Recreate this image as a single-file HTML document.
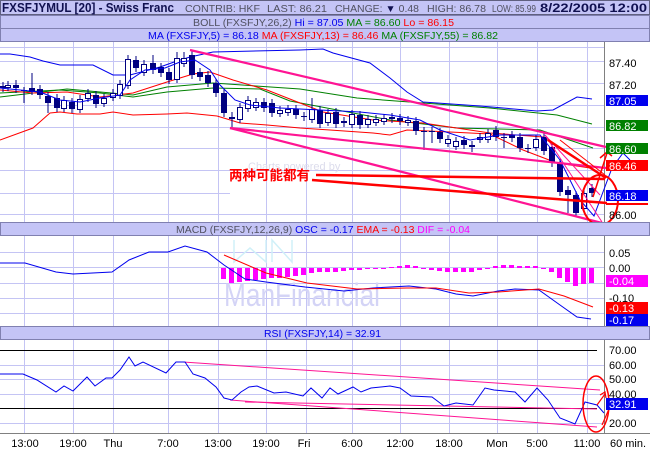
<!DOCTYPE html>
<html><head><meta charset="utf-8"><style>
html,body{margin:0;padding:0;background:#fff;}
svg{display:block;font-family:"Liberation Sans",sans-serif;}
</style></head><body>
<svg width="650" height="450" viewBox="0 0 650 450" xmlns="http://www.w3.org/2000/svg">
<rect x="0" y="0" width="650" height="450" fill="#fff"/>
<!-- header bars -->
<rect x="0.5" y="0.5" width="649" height="14" fill="#c4c4f6" stroke="#606080"/>
<rect x="0.5" y="15.5" width="649" height="13" fill="#c4c4f6" stroke="#8080b0"/>
<rect x="0.5" y="28.5" width="649" height="13" fill="#c4c4f6" stroke="#8080b0"/>
<text x="2" y="12" font-size="12.5" font-weight="bold" fill="#101050" textLength="172" lengthAdjust="spacingAndGlyphs">FXSFJYMUL [20] - Swiss Franc</text>
<text x="185" y="12" font-size="10" fill="#505060" textLength="75" lengthAdjust="spacingAndGlyphs">CONTRIB: HKF</text>
<text x="267" y="12" font-size="10" fill="#505060" textLength="60" lengthAdjust="spacingAndGlyphs">LAST: 86.21</text>
<text x="335" y="12" font-size="10" fill="#505060" textLength="84" lengthAdjust="spacingAndGlyphs">CHANGE: <tspan fill="#101050">▼</tspan> 0.48</text>
<text x="427" y="12" font-size="10" fill="#505060" textLength="59" lengthAdjust="spacingAndGlyphs">HIGH: 86.78</text>
<text x="492" y="12" font-size="10" fill="#505060" textLength="44" lengthAdjust="spacingAndGlyphs">LOW: 85.99</text>
<text x="540" y="12" font-size="12" font-weight="bold" fill="#101050" textLength="107" lengthAdjust="spacingAndGlyphs">8/22/2005 12:00</text>
<text x="193" y="26" font-size="10" fill="#505060" textLength="261" lengthAdjust="spacingAndGlyphs">BOLL (FXSFJY,26,2) <tspan fill="#0000ee">Hi = 87.05</tspan> <tspan fill="#008000">MA = 86.60</tspan> <tspan fill="#ff0000">Lo = 86.15</tspan></text>
<text x="148" y="39" font-size="10" fill="#0000ee" textLength="350" lengthAdjust="spacingAndGlyphs">MA (FXSFJY,5) = 86.18 <tspan fill="#ff0000">MA (FXSFJY,13) = 86.46</tspan> <tspan fill="#008000">MA (FXSFJY,55) = 86.82</tspan></text>

<!-- grid -->
<g stroke="#c4c4f4" stroke-width="1">
<line x1="0" y1="47.5" x2="604" y2="47.5"/><line x1="0" y1="61.5" x2="604" y2="61.5"/><line x1="0" y1="83.5" x2="604" y2="83.5"/><line x1="0" y1="105.5" x2="604" y2="105.5"/><line x1="0" y1="127.5" x2="604" y2="127.5"/><line x1="0" y1="148.5" x2="604" y2="148.5"/><line x1="0" y1="170.5" x2="604" y2="170.5"/><line x1="0" y1="193.5" x2="230" y2="193.5"/><line x1="0" y1="214.5" x2="604" y2="214.5"/>
<line x1="0" y1="252.5" x2="604" y2="252.5"/><line x1="0" y1="267.5" x2="604" y2="267.5"/><line x1="0" y1="283.5" x2="604" y2="283.5"/><line x1="0" y1="298.5" x2="604" y2="298.5"/><line x1="0" y1="313.5" x2="604" y2="313.5"/>
<line x1="0" y1="365.5" x2="604" y2="365.5"/><line x1="0" y1="379.5" x2="604" y2="379.5"/><line x1="0" y1="394.5" x2="604" y2="394.5"/><line x1="0" y1="423.5" x2="604" y2="423.5"/>
</g>
<g stroke="#c4c4f4" stroke-width="1">
<path d="M24.5 42V433M73.5 42V433M113.5 42V433M168.5 42V433M218.5 42V433M266.5 42V433M306.5 42V433M352.5 42V433M400.5 42V433M449.5 42V433M497.5 42V433M537.5 42V433M587.5 42V433"/>
</g>
<line x1="604.5" y1="42" x2="604.5" y2="433" stroke="#808080"/>

<!-- watermark -->
<text x="224" y="306" font-size="32" fill="#d4d4f6" textLength="156" lengthAdjust="spacingAndGlyphs">ManFinancial</text>
<path d="M234 240V262L250 248L266 262V240M272 262V240L292 262V240" stroke="#d0f0f8" stroke-width="1.5" fill="none"/>

<!-- main chart lines -->
<polyline fill="none" stroke="#0000ee" stroke-width="1" points="0,54 10,54 30,57 43,61 60,65 93,65 113,75 130,75 160,67 177,61 190,57 213,52 300,50 323,49 333,53 370,63 390,78 407,92 423,102 480,106 537,111 553,110 577,97 592,99"/>
<polyline fill="none" stroke="#ff0000" stroke-width="1" points="0,140 33,128 50,113 60,112 77,114 100,114 113,112 133,115 167,114 187,113 217,116 227,119 240,123 267,125 300,128 330,130 373,133 390,135 407,130 450,132 490,134 523,150 557,163 590,168"/>
<polyline fill="none" stroke="#008000" stroke-width="1" points="0,97 67,89 133,95 167,87 213,83 300,89 357,98 423,103 490,108 557,115 592,124"/>
<polyline fill="none" stroke="#008000" stroke-width="1" points="0,93 60,90 100,93 133,97 167,92 213,88 260,89 290,101 390,120 457,128 540,130 593,148"/>
<polyline fill="none" stroke="#ff0000" stroke-width="1" points="0,90 33,93 67,92 100,97 133,93 167,82 193,74 210,72 233,80 267,90 300,103 323,112 373,120 423,123 490,133 543,137 557,147 590,167"/>

<!-- candles -->
<g stroke="#000080" stroke-width="1">
<path d="M3 82V92M8 81V91M16 80V93M24 87V103M32 73V95M40 85V99M48 92V113M57 94V112M64 96V112M72 98V113M80 95V113M88 89V102M96 91V108M104 94V107M113 89V101M120 80V99M128 55V89M136 56V72M144 60V76M153 55V74M161 63V77M169 68V84M177 52V83M184 52V67M192 50V79M200 68V81M208 71V87M216 79V97M224 89V117M232 112V128M240 103V123M248 96V112M256 98V111M264 98V112M272 99V117M280 106V117M288 105V116M296 105V119M304 112V121M312 98V123M320 106V128M328 109V126M336 108V128M344 117V127M352 110V128M360 111V129M368 115V128M376 115V126M384 114V125M392 113V123M400 114V125M408 116V126M416 117V135M424 127V150M432 127V143M440 128V143M448 135V147M456 137V150M464 136V149M472 141V152M480 133V143M488 129V143M496 126V141M504 133V148M512 131V142M520 133V152M528 144V153M536 135V151M544 133V155M552 143V167M560 159V196M568 186V213M576 191V217M584 189V212M592 184V197"/>
</g>
<g fill="#000080">
<rect x="0" y="86" width="6" height="2"/><rect x="13" y="85" width="6" height="3"/><rect x="21" y="90" width="6" height="1"/><rect x="29" y="88" width="6" height="4"/><rect x="37" y="89" width="6" height="6"/><rect x="45" y="96" width="6" height="7"/><rect x="54" y="98" width="6" height="10"/><rect x="69" y="102" width="6" height="7"/><rect x="93" y="95" width="6" height="9"/><rect x="133" y="60" width="6" height="8"/><rect x="150" y="63" width="6" height="7"/><rect x="158" y="67" width="6" height="6"/><rect x="166" y="72" width="6" height="8"/><rect x="189" y="55" width="6" height="20"/><rect x="197" y="72" width="6" height="5"/><rect x="205" y="75" width="6" height="8"/><rect x="213" y="83" width="6" height="10"/><rect x="221" y="93" width="6" height="20"/><rect x="229" y="117" width="6" height="2"/><rect x="261" y="102" width="6" height="6"/><rect x="269" y="103" width="6" height="10"/><rect x="293" y="109" width="6" height="6"/><rect x="301" y="116" width="6" height="1"/><rect x="317" y="110" width="6" height="14"/><rect x="333" y="112" width="6" height="12"/><rect x="341" y="121" width="6" height="2"/><rect x="357" y="115" width="6" height="10"/><rect x="389" y="117" width="6" height="2"/><rect x="397" y="118" width="6" height="3"/><rect x="413" y="121" width="6" height="10"/><rect x="421" y="131" width="6" height="1"/><rect x="429" y="131" width="6" height="1"/><rect x="437" y="132" width="6" height="7"/><rect x="461" y="140" width="6" height="5"/><rect x="469" y="145" width="6" height="2"/><rect x="493" y="130" width="6" height="7"/><rect x="501" y="137" width="6" height="1"/><rect x="509" y="135" width="6" height="3"/><rect x="517" y="137" width="6" height="11"/><rect x="525" y="148" width="6" height="1"/><rect x="541" y="137" width="6" height="14"/><rect x="549" y="147" width="6" height="16"/><rect x="557" y="163" width="6" height="29"/><rect x="565" y="190" width="6" height="5"/><rect x="573" y="195" width="6" height="18"/><rect x="589" y="188" width="6" height="5"/>
</g>
<g fill="#fff" stroke="#000080">
<rect x="5.5" y="85.5" width="5" height="2"/><rect x="61.5" y="100.5" width="5" height="8"/><rect x="77.5" y="99.5" width="5" height="10"/><rect x="85.5" y="93.5" width="5" height="5"/><rect x="101.5" y="98.5" width="5" height="5"/><rect x="110.5" y="93.5" width="5" height="4"/><rect x="117.5" y="84.5" width="5" height="11"/><rect x="125.5" y="59.5" width="5" height="26"/><rect x="141.5" y="64.5" width="5" height="8"/><rect x="174.5" y="58.5" width="5" height="21"/><rect x="181.5" y="58.5" width="5" height="5"/><rect x="237.5" y="107.5" width="5" height="12"/><rect x="245.5" y="100.5" width="5" height="8"/><rect x="253.5" y="102.5" width="5" height="5"/><rect x="277.5" y="110.5" width="5" height="3"/><rect x="285.5" y="109.5" width="5" height="3"/><rect x="309.5" y="109.5" width="5" height="10"/><rect x="325.5" y="113.5" width="5" height="9"/><rect x="349.5" y="114.5" width="5" height="10"/><rect x="365.5" y="119.5" width="5" height="5"/><rect x="373.5" y="119.5" width="5" height="3"/><rect x="381.5" y="118.5" width="5" height="3"/><rect x="405.5" y="120.5" width="5" height="2"/><rect x="445.5" y="139.5" width="5" height="4"/><rect x="453.5" y="141.5" width="5" height="5"/><rect x="477.5" y="137.5" width="5" height="2"/><rect x="485.5" y="133.5" width="5" height="6"/><rect x="533.5" y="139.5" width="5" height="8"/><rect x="581.5" y="193.5" width="5" height="15"/>
</g>
<polyline fill="none" stroke="#0000ee" stroke-width="1" points="0,88 40,92 60,100 80,102 100,98 120,95 130,80 145,70 165,68 180,62 195,60 210,70 220,85 235,100 250,105 280,108 320,110 360,112 390,115 420,120 440,130 470,140 500,135 540,135 560,160 580,200 594,216 612,168 623,153 630,160"/>

<g stroke="#ff1493" stroke-width="2.2" fill="none">
<line x1="190" y1="50" x2="606" y2="147"/>
<line x1="230" y1="128" x2="606" y2="168"/>
<line x1="230" y1="128" x2="602" y2="223"/>
</g>
<g stroke="#ff1493" stroke-width="1" fill="none">
<line x1="545" y1="135" x2="602" y2="222"/>
<line x1="545" y1="135" x2="600" y2="195"/>
</g>
<g stroke="#ff0000" stroke-width="2.5" fill="none">
<line x1="316" y1="175" x2="605" y2="179"/>
<line x1="312" y1="180" x2="607" y2="203"/>
<line x1="548" y1="140" x2="606" y2="178"/>
</g>
<line x1="560" y1="140" x2="605" y2="175" stroke="#ff0000" stroke-width="1"/>
<ellipse cx="600" cy="200" rx="18" ry="25" fill="none" stroke="#ff0000" stroke-width="2"/>
<path d="M593 197L607 153M600 158L607 152L612 156" stroke="#ff0000" stroke-width="1.5" fill="none"/>
<text x="248" y="170" font-size="11" fill="#dcdcec">Charts powered by</text>
<text x="229" y="180" font-size="13.5" font-weight="bold" fill="#ff0000" font-family="'Liberation Sans','Noto Sans CJK SC',sans-serif" textLength="81" lengthAdjust="spacingAndGlyphs">两种可能都有</text>

<g font-size="11" fill="#000">
<text x="609" y="67">87.40</text><text x="609" y="89">87.20</text><text x="609" y="219">86.00</text>
</g>
<rect x="606" y="95" width="42" height="11" fill="#0000ee"/><text x="609" y="105" font-size="11" fill="#fff">87.05</text>
<rect x="606" y="120" width="42" height="11" fill="#008000"/><text x="609" y="130" font-size="11" fill="#fff">86.82</text>
<rect x="606" y="143" width="42" height="11" fill="#008000"/><text x="609" y="153" font-size="11" fill="#fff">86.60</text>
<rect x="606" y="160" width="42" height="11" fill="#ff0000"/><text x="609" y="170" font-size="11" fill="#fff">86.46</text>
<rect x="606" y="190" width="42" height="11" fill="#0000ee"/><text x="609" y="200" font-size="11" fill="#fff">86.18</text>
<rect x="606" y="203" width="42" height="2" fill="#ff0000"/>

<rect x="0.5" y="222.5" width="649" height="13" fill="#c4c4f6" stroke="#8080b0"/>
<text x="176" y="233" font-size="10" fill="#505060" textLength="294" lengthAdjust="spacingAndGlyphs">MACD (FXSFJY,12,26,9) <tspan fill="#0000ee">OSC = -0.17</tspan> <tspan fill="#ff0000">EMA = -0.13</tspan> <tspan fill="#ff00ff">DIF = -0.04</tspan></text>
<g fill="#ff00ff">
<rect x="221" y="268" width="5" height="11"/><rect x="229" y="268" width="5" height="15"/><rect x="237" y="268" width="5" height="14"/><rect x="245" y="268" width="5" height="13"/><rect x="253" y="268" width="5" height="12"/><rect x="261" y="268" width="5" height="11"/><rect x="269" y="268" width="5" height="10"/><rect x="277" y="268" width="5" height="10"/><rect x="285" y="268" width="5" height="9"/><rect x="293" y="268" width="5" height="8"/><rect x="301" y="268" width="5" height="7"/><rect x="309" y="268" width="5" height="5"/><rect x="317" y="268" width="5" height="4"/><rect x="325" y="268" width="5" height="4"/><rect x="333" y="268" width="5" height="4"/><rect x="341" y="268" width="5" height="3"/><rect x="349" y="268" width="5" height="2"/><rect x="357" y="268" width="5" height="2"/><rect x="365" y="268" width="5" height="1"/><rect x="373" y="268" width="5" height="1"/><rect x="381" y="268" width="5" height="1"/><rect x="389" y="267" width="5" height="1"/><rect x="397" y="266" width="5" height="2"/><rect x="405" y="265" width="5" height="3"/><rect x="413" y="266" width="5" height="2"/><rect x="421" y="268" width="5" height="1"/><rect x="429" y="268" width="5" height="2"/><rect x="437" y="268" width="5" height="3"/><rect x="445" y="268" width="5" height="4"/><rect x="453" y="268" width="5" height="4"/><rect x="461" y="268" width="5" height="4"/><rect x="469" y="268" width="5" height="4"/><rect x="477" y="268" width="5" height="2"/><rect x="485" y="268" width="5" height="1"/><rect x="493" y="266" width="5" height="2"/><rect x="501" y="265" width="5" height="3"/><rect x="509" y="265" width="5" height="3"/><rect x="517" y="266" width="5" height="2"/><rect x="525" y="266" width="5" height="2"/><rect x="533" y="266" width="5" height="2"/><rect x="541" y="268" width="5" height="1"/><rect x="549" y="268" width="5" height="4"/><rect x="557" y="268" width="5" height="10"/><rect x="565" y="268" width="5" height="14"/><rect x="573" y="268" width="5" height="18"/><rect x="581" y="268" width="5" height="16"/><rect x="589" y="268" width="5" height="15"/>
</g>
<polyline fill="none" stroke="#0000ee" stroke-width="1" points="0,263 25,263 56,272 73,274 112,272 129,260 149,252 168,252 185,246 207,252 224,265 245,279 266,282 305,287 344,291 373,288 409,286 436,289 456,294 473,296 498,291 515,289 539,290 560,305 577,317 591,319"/>
<polyline fill="none" stroke="#ff0000" stroke-width="1" points="224,255 266,273 307,283 357,289 407,288 436,288 469,293 498,292 539,289 564,296 593,307"/>
<g font-size="11" fill="#000"><text x="609" y="257">0.05</text><text x="609" y="272">0.00</text><text x="609" y="302">-0.10</text></g>
<rect x="606" y="275" width="42" height="12" fill="#ff00ff"/><text x="609" y="285" font-size="11" fill="#fff">-0.04</text>
<rect x="606" y="302" width="42" height="12" fill="#ff0000"/><text x="609" y="312" font-size="11" fill="#fff">-0.13</text>
<rect x="606" y="314" width="42" height="12" fill="#0000ee"/><text x="609" y="324" font-size="11" fill="#fff">-0.17</text>

<rect x="0.5" y="326.5" width="649" height="13" fill="#c4c4f6" stroke="#8080b0"/>
<text x="264" y="337" font-size="10" fill="#0000ee" textLength="117" lengthAdjust="spacingAndGlyphs">RSI (FXSFJY,14) = 32.91</text>
<line x1="0" y1="350.5" x2="597" y2="350.5" stroke="#000"/>
<line x1="0" y1="408.5" x2="597" y2="408.5" stroke="#000"/>
<g stroke="#ff1493" stroke-width="1" fill="none">
<line x1="183" y1="362" x2="600" y2="390"/>
<line x1="230" y1="400" x2="597" y2="427"/>
<line x1="245" y1="402" x2="597" y2="409"/>
</g>
<polyline fill="none" stroke="#0000ee" stroke-width="1" points="0,374 23,374 37,380 56,392 64,386 73,391 87,377 95,386 106,378 112,378 120,370 129,357 135,366 143,362 166,373 176,362 185,362 193,374 205,378 216,387 224,398 232,400 241,392 249,387 257,386 274,393 286,392 303,396 311,388 322,398 330,388 338,394 353,387 361,392 371,388 390,386 400,388 411,396 432,397 444,406 456,403 473,405 485,388 494,390 515,392 525,402 537,388 548,400 560,418 575,424 585,402 597,405 604,413"/>
<ellipse cx="596" cy="404" rx="13" ry="28" fill="none" stroke="#ff0000" stroke-width="1.5"/>
<path d="M597 405L605 394M600 395L605 392L606 398M602 425L612 402M608 405L612 400L615 406" stroke="#ff0000" stroke-width="1.2" fill="none"/>
<g font-size="11" fill="#000"><text x="609" y="354">70.00</text><text x="609" y="369">60.00</text><text x="609" y="383">50.00</text><text x="609" y="398">40.00</text><text x="609" y="427">20.00</text></g>
<rect x="606" y="398" width="42" height="12" fill="#0000ee"/><text x="609" y="408" font-size="11" fill="#fff">32.91</text>

<line x1="0" y1="433.5" x2="650" y2="433.5" stroke="#808080"/>
<g font-size="11" fill="#000" text-anchor="middle">
<text x="25" y="447">13:00</text><text x="73" y="447">19:00</text><text x="113" y="447">Thu</text><text x="168" y="447">7:00</text><text x="218" y="447">13:00</text><text x="266" y="447">19:00</text><text x="304" y="447">Fri</text><text x="352" y="447">6:00</text><text x="400" y="447">12:00</text><text x="449" y="447">18:00</text><text x="497" y="447">Mon</text><text x="537" y="447">5:00</text><text x="587" y="447">11:00</text><text x="628" y="447">60 min.</text>
</g>
</svg>
</body></html>
